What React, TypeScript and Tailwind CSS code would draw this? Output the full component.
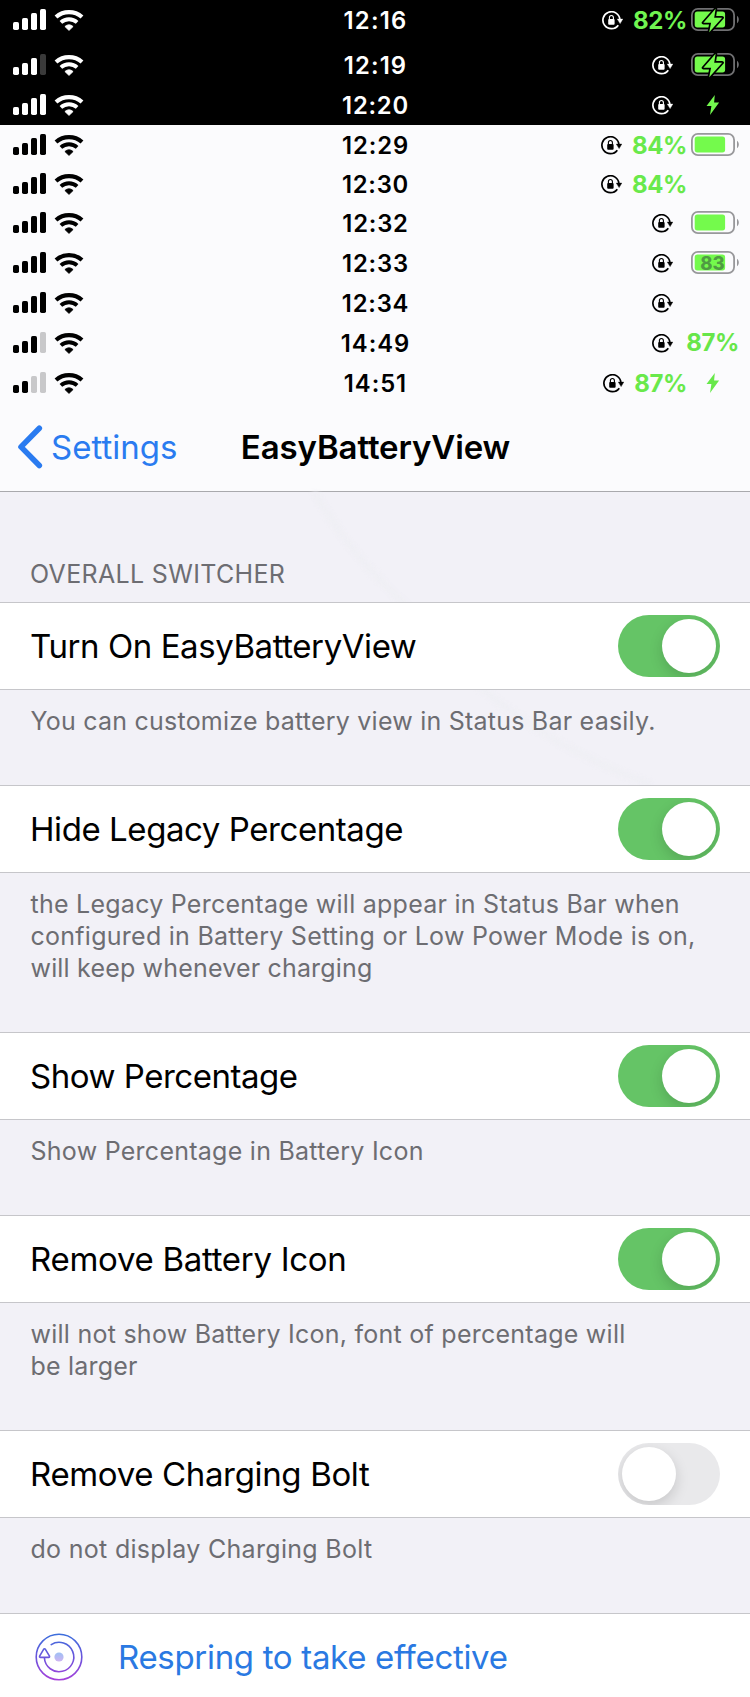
import type { ReactNode } from "react";

type Icon = "charging" | "bolt" | "full" | "number" | "percent" | "none";

interface StatusRow {
  time: string;
  bars: number;
  height: string;
  tracking: string;
  percent?: string;
  icon: Icon;
  dark?: boolean;
}

const STATUS_ROWS: StatusRow[] = [
  { time: "12:16", bars: 4, height: "h-[45px]", tracking: "tracking-[1.2px]", percent: "82%", icon: "charging", dark: true },
  { time: "12:19", bars: 3, height: "h-10", tracking: "tracking-[1.15px]", icon: "charging", dark: true },
  { time: "12:20", bars: 4, height: "h-10", tracking: "tracking-[0.75px]", icon: "bolt", dark: true },
  { time: "12:29", bars: 4, height: "h-[39px]", tracking: "tracking-[0.9px]", percent: "84%", icon: "full" },
  { time: "12:30", bars: 4, height: "h-[39px]", tracking: "tracking-[0.75px]", percent: "84%", icon: "none" },
  { time: "12:32", bars: 4, height: "h-10", tracking: "tracking-[0.8px]", icon: "full" },
  { time: "12:33", bars: 4, height: "h-10", tracking: "tracking-[0.8px]", icon: "number" },
  { time: "12:34", bars: 4, height: "h-10", tracking: "tracking-[0.8px]", icon: "none" },
  { time: "14:49", bars: 3, height: "h-10", tracking: "tracking-[0.95px]", percent: "87%", icon: "percent" },
  { time: "14:51", bars: 2, height: "h-10", tracking: "tracking-[0.95px]", percent: "87%", icon: "bolt" },
];

function Signal({ bars, dark }: { bars: number; dark?: boolean }) {
  const heights = [8, 12, 17, 21];
  const dim = dark ? "#3a3a3a" : "#c8c8ca";
  return (
    <svg width="33" height="21" viewBox="0 0 33 21" className="mt-[9px] shrink-0">
      {heights.map((h, i) => (
        <rect key={h} x={i * 9} y={21 - h} width="6" height={h} rx="1.7" fill={i < bars ? "currentColor" : dim} />
      ))}
    </svg>
  );
}

function Wifi() {
  return (
    <svg width="30" height="22" viewBox="0 0 30 22" className="mt-[9px] ml-[8px] shrink-0" fill="none" stroke="currentColor">
      <path d="M2 8A19.6 19.6 0 0 1 28 8" strokeWidth="4.2" />
      <path d="M6.9 13.4A12.2 12.2 0 0 1 23.1 13.4" strokeWidth="3.9" />
      <path d="M15 21.4L10.9 17.5A6.3 6.3 0 0 1 19.1 17.5Z" fill="currentColor" strokeWidth="0.8" strokeLinejoin="round" />
    </svg>
  );
}

function RotationLock({ className }: { className: string }) {
  return (
    <svg width="21" height="20" viewBox="0 0 21 20" className={`mt-[11px] shrink-0 ${className}`} fill="none" stroke="currentColor">
      <path d="M16.3 14.2A8.5 8.5 0 1 1 17.9 8.8" strokeWidth="1.7" />
      <path d="M15.3 8.1H20.8L18.1 12.6Z" fill="currentColor" strokeWidth="0.4" strokeLinejoin="round" />
      <rect x="6.2" y="8.1" width="6.4" height="5.6" rx="0.9" fill="currentColor" stroke="none" />
      <path d="M7.4 8.4V6.6A2 2.1 0 0 1 11.4 6.6V8.4" strokeWidth="1.1" />
    </svg>
  );
}

const BOLT_IN_BATTERY = "M24.6 0.8L12.4 14.8H20.1L18.2 24.2L31.2 9.7H23.2Z";

function Battery({ dark, charging, label }: { dark?: boolean; charging?: boolean; label?: string }) {
  const outline = dark ? "#707072" : "#98989b";
  return (
    <div className="relative mt-[7px] h-[26px] w-12 shrink-0">
      <svg width="48" height="26" viewBox="0 -1 48 26" fill="none">
        <rect x="0.9" y="0.9" width="42.2" height="21.2" rx="6" stroke={outline} strokeWidth="1.8" />
        <path d="M46 7.7C47.3 8.6 47.8 10 47.8 11.5S47.3 14.4 46 15.3Z" fill={outline} />
        <rect x="3.7" y="3.4" width="30.4" height="16" rx="2.6" fill="#74fa4c" />
        {charging && (
          <>
            <path d={BOLT_IN_BATTERY} stroke="#000" strokeWidth="3.4" strokeLinejoin="round" />
            <path d={BOLT_IN_BATTERY} fill="#74fa4c" />
          </>
        )}
      </svg>
      {label && (
        <span className="absolute inset-x-0 top-0 w-[43px] text-center text-[18.5px] leading-[26px] font-extrabold text-[#4a8a42]/85">
          {label}
        </span>
      )}
    </div>
  );
}

function Bolt({ dark }: { dark?: boolean }) {
  return (
    <div className="flex w-12 shrink-0 justify-center">
      <svg width="14" height="20" viewBox="0 0 14 20" className={dark ? "mt-[10px] mr-[4px]" : "mt-[9.5px] mr-[4px]"}>
        <path d="M8.8 0L0.5 11H5.4L4 20L13.1 7.4H8.1Z" fill={dark ? "#72f84e" : "#67e84a"} />
      </svg>
    </div>
  );
}

function Percent({ children, className }: { children: ReactNode; className: string }) {
  return <span className={`text-[24px] leading-[41px] font-bold tracking-[-0.4px] ${className}`}>{children}</span>;
}

function StatusLine({ row }: { row: StatusRow }) {
  const { dark, icon, percent } = row;
  const beforeSlot = percent && icon !== "percent";
  return (
    <div className={`grid grid-cols-[1fr_auto_1fr] items-start overflow-hidden ${row.height} ${dark ? "bg-black text-white" : "bg-[#fbfbfd] text-black"}`}>
      <div className="flex items-start pl-[13px]">
        <Signal bars={row.bars} dark={dark} />
        <Wifi />
      </div>
      <span className={`pl-px text-[23.8px] leading-[41px] font-semibold ${row.tracking}`}>{row.time}</span>
      <div className="flex items-start justify-end pr-[11px]">
        <RotationLock className={beforeSlot ? "mr-[10px]" : "mr-[18px]"} />
        {beforeSlot && <Percent className={dark ? "mr-[4px] text-[#70f551]" : "mr-[4px] text-[#69e94b]"}>{percent}</Percent>}
        {icon === "charging" && <Battery dark={dark} charging />}
        {icon === "full" && <Battery />}
        {icon === "number" && <Battery label="83" />}
        {icon === "bolt" && <Bolt dark={dark} />}
        {icon === "none" && <div className="w-12 shrink-0" />}
        {icon === "percent" && (
          <div className="flex w-12 shrink-0 justify-end">
            <Percent className="-mt-px text-[#67e64a]">{percent}</Percent>
          </div>
        )}
      </div>
    </div>
  );
}

function Toggle({ on }: { on: boolean }) {
  return (
    <div role="switch" aria-checked={on} className={`flex h-[62px] w-[102px] shrink-0 items-center overflow-hidden rounded-full px-1 ${on ? "justify-end bg-[#65c466]" : "justify-start bg-[#e9e9eb]"}`}>
      <div className="size-[54px] rounded-full bg-white shadow-[0_5px_14px_rgba(0,0,0,0.15)]" />
    </div>
  );
}

interface Setting {
  title: string;
  tracking: string;
  on: boolean;
  notes: { text: string; tracking: string }[];
}

const SETTINGS: Setting[] = [
  {
    title: "Turn On EasyBatteryView",
    tracking: "tracking-[-0.43px]",
    on: true,
    notes: [{ text: "You can customize battery view in Status Bar easily.", tracking: "tracking-[0.226px]" }],
  },
  {
    title: "Hide Legacy Percentage",
    tracking: "tracking-[-0.43px]",
    on: true,
    notes: [
      { text: "the Legacy Percentage will appear in Status Bar when", tracking: "tracking-[0.251px]" },
      { text: "configured in Battery Setting or Low Power Mode is on,", tracking: "tracking-[0.261px]" },
      { text: "will keep whenever charging", tracking: "tracking-[0.18px]" },
    ],
  },
  {
    title: "Show Percentage",
    tracking: "tracking-[-0.48px]",
    on: true,
    notes: [{ text: "Show Percentage in Battery Icon", tracking: "tracking-[0.26px]" }],
  },
  {
    title: "Remove Battery Icon",
    tracking: "tracking-[-0.29px]",
    on: true,
    notes: [
      { text: "will not show Battery Icon, font of percentage will", tracking: "tracking-[0.252px]" },
      { text: "be larger", tracking: "tracking-[0.2px]" },
    ],
  },
  {
    title: "Remove Charging Bolt",
    tracking: "tracking-[-0.35px]",
    on: false,
    notes: [{ text: "do not display Charging Bolt", tracking: "tracking-[0.3px]" }],
  },
];

function RespringIcon() {
  return (
    <svg width="48" height="48" viewBox="0 0 48 48" fill="none" className="shrink-0">
      <defs>
        <linearGradient id="ring" gradientUnits="userSpaceOnUse" x1="24" y1="0" x2="24" y2="48">
          <stop offset="0" stopColor="#3a70dc" />
          <stop offset="0.5" stopColor="#6a55dc" />
          <stop offset="1" stopColor="#a83fda" />
        </linearGradient>
        <linearGradient id="dot" x1="0" y1="0" x2="0" y2="1">
          <stop offset="0" stopColor="#9dc0f4" />
          <stop offset="1" stopColor="#d0b4f2" />
        </linearGradient>
      </defs>
      <g stroke="url(#ring)" strokeWidth="1.6" strokeLinecap="round" strokeLinejoin="round">
        <circle cx="24" cy="24" r="22.8" />
        <path d="M16.2 11.6A14.7 14.7 0 1 1 9.4 24.8" />
        <path d="M8.6 16.3Q9.5 15.2 10.4 16.3L14.5 23.2Q14.8 24.3 13.7 24.4H5.5Q4.2 24.3 4.6 23.2Z" fill="#fff" />
      </g>
      <circle cx="24" cy="24" r="4.6" fill="url(#dot)" />
    </svg>
  );
}

export default function App() {
  return (
    <div className="relative h-[1697px] w-[750px] overflow-hidden bg-[#f2f1f7] font-['Inter','Liberation_Sans',sans-serif] text-black">
      <header>
        <div className="h-[403px] bg-[#fbfbfd]">
          {STATUS_ROWS.map((row) => (
            <StatusLine key={row.time} row={row} />
          ))}
        </div>
        <nav className="grid h-[89px] grid-cols-[1fr_auto_1fr] items-center border-b border-[#a9a9ad] bg-[#fbfbfd] pb-px">
          <a className="flex items-center pl-[17px] text-[#2a7bf0]">
            <svg width="26" height="44" viewBox="0 0 26 44" fill="none" stroke="currentColor" strokeWidth="5.6" strokeLinecap="round" strokeLinejoin="round">
              <path d="M22.3 3.3L4 21.9L22.3 40.5" />
            </svg>
            <span className="ml-[8px] text-[33px] leading-[40px]">Settings</span>
          </a>
          <h1 className="pl-px text-[33px] leading-[40px] font-semibold tracking-[-0.12px]">EasyBatteryView</h1>
          <span />
        </nav>
      </header>

      <svg width="360" height="294" viewBox="0 0 360 294" fill="none" className="pointer-events-none absolute top-[492px] left-[300px] blur-[2px]">
        <path d="M14 0C60 76 92 98 110 118C174 210 274 265 350 292" stroke="#efeff4" strokeWidth="6" />
      </svg>

      <main className="relative">
        <h2 className="h-[110px] pt-[66px] pl-[30px] text-[25px] leading-8 tracking-[0.33px] text-[#6d6d72]">OVERALL SWITCHER</h2>
        {SETTINGS.map((s) => (
          <section key={s.title}>
            <div className="flex h-[88px] items-center justify-between border-y border-[#c6c6ca] bg-white px-[30px]">
              <span className={`text-[33px] leading-10 whitespace-nowrap ${s.tracking}`}>{s.title}</span>
              <Toggle on={s.on} />
            </div>
            <div className="pt-[15px] pb-12 pl-[30.5px] text-[25px] leading-8 text-[#6d6d72]">
              {s.notes.map((n) => (
                <p key={n.text} className={`whitespace-nowrap ${n.tracking}`}>{n.text}</p>
              ))}
            </div>
          </section>
        ))}
        <div className="flex h-[88px] items-center border-t border-[#c6c6ca] bg-white pb-[2px] pl-[35px]">
          <RespringIcon />
          <span className="ml-[35px] text-[33px] leading-10 tracking-[-0.32px] whitespace-nowrap text-[#2a79e2]">Respring to take effective</span>
        </div>
      </main>
    </div>
  );
}
